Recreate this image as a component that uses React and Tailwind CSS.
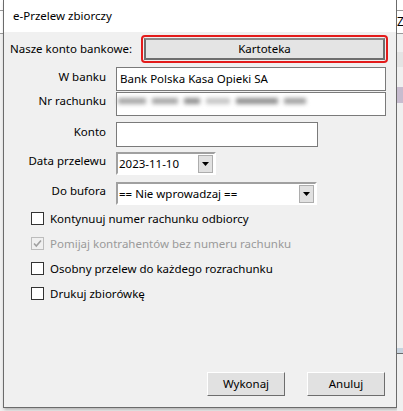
import React from 'react';

const font = { fontFamily: '"Noto Sans", "Segoe UI", Arial, sans-serif' };

const Label = ({ children, className = '' }) => (
  <div className={`w-[96px] shrink-0 text-right text-[11.5px] text-black ${className}`}>{children}</div>
);

const TextBox = ({ className = '', children }) => (
  <div className={`h-[24px] border border-[#7a7a7a] bg-white flex items-center px-[3px] text-[11.5px] text-black ${className}`}>
    {children}
  </div>
);

const Arrow = () => (
  <div className="w-[15px] h-[18px] bg-[#e1e1e1] border border-[#adadad] flex items-center justify-center">
    <svg width="7" height="4" viewBox="0 0 7 4">
      <path d="M0 0h7L3.5 4z" fill="#000" />
    </svg>
  </div>
);

const Combo = ({ value, className = '' }) => (
  <div className={`h-[23px] border-2 border-[#a0a0a0] border-r-white border-b-white bg-white flex items-center justify-between pl-[1px] pr-[1px] text-[11.5px] text-black ${className}`}>
    <span>{value}</span>
    <Arrow />
  </div>
);

const Check = ({ label, checked, disabled }) => (
  <div className="flex items-center gap-[6px] h-[25px]">
    <div className={`w-[13px] h-[13px] border ${disabled ? 'border-[#bcbcbc] bg-[#f0f0f0]' : 'border-[#333] bg-white'} flex items-center justify-center`}>
      {checked && (
        <svg width="9" height="9" viewBox="0 0 9 9">
          <path d="M1 4.5l2.3 2.5L8 1.5" fill="none" stroke="#a0a0a0" strokeWidth="1.6" />
        </svg>
      )}
    </div>
    <span className={`text-[11.5px] ${disabled ? 'text-[#9a9a9a]' : 'text-black'}`}>{label}</span>
  </div>
);

const Btn = ({ children }) => (
  <button className="w-[78px] h-[24px] bg-[#e1e1e1] border border-[#adadad] border-r-[#6d6d6d] border-b-[#6d6d6d] border-l-white border-t-white text-[11.5px] text-black">
    {children}
  </button>
);

export default function App() {
  return (
    <div style={font} className="w-[403px] h-[411px] bg-[#f3f3f3] flex overflow-hidden relative">
      {/* strip of the window behind, on the left */}
      <div className="w-[3px] shrink-0 flex flex-col">
        <div className="h-[10px] bg-white" />
        <div className="h-[1px] bg-[#9a9a9a]" />
        <div className="h-[22px] bg-white" />
        <div className="h-[1px] bg-[#9a9a9a]" />
        <div className="flex-1 bg-[#f0f0f0]" />
      </div>

      {/* dialog */}
      <div className="w-[394px] h-[408px] shrink-0 border border-t-0 border-[#6b6b6b] bg-[#f0f0f0] flex flex-col shadow-[1px_2px_3px_rgba(0,0,0,0.25)]">
        <div className="h-[32px] bg-white flex items-center pl-[9px] text-[11.5px] text-black shrink-0">e-Przelew zbiorczy</div>

        <div className="flex-1 flex flex-col pl-[6px]">
          <div className="flex items-center mt-[3px] h-[28px]">
            <div className="w-[131px] text-[11.5px] text-black">Nasze konto bankowe:</div>
            <div className="w-[247px] h-[28px] rounded-[4px] border-2 border-[#e31b1b] p-[1px]">
              <div className="h-full bg-[#e4e4e4] border-2 border-[#6e6e6e] border-t-[#8a8a8a] flex items-center justify-center text-[11.5px] text-black">
                Kartoteka
              </div>
            </div>
          </div>

          <div className="flex mt-[4px]">
            <Label className="pt-[1px]">W banku</Label>
            <TextBox className="ml-[10px] w-[270px]">Bank Polska Kasa Opieki SA</TextBox>
          </div>

          <div className="flex mt-[1px]">
            <Label>Nr rachunku</Label>
            <TextBox className="ml-[10px] w-[270px]">
              <div className="flex items-center gap-[6px] blur-[2px] -mt-[6px] -ml-[2px]">
                <div className="w-[28px] h-[6px] bg-[#a5a5a5]" />
                <div className="w-[26px] h-[6px] bg-[#a5a5a5]" />
                <div className="w-[16px] h-[6px] bg-[#909090]" />
                <div className="w-[24px] h-[6px] bg-[#c4c4c4]" />
                <div className="w-[42px] h-[6px] bg-[#8f8f8f]" />
                <div className="w-[22px] h-[6px] bg-[#a0a0a0]" />
              </div>
            </TextBox>
          </div>

          <div className="flex mt-[6px]">
            <Label className="pt-[1px]">Konto</Label>
            <TextBox className="ml-[10px] w-[202px] h-[25px]" />
          </div>

          <div className="flex mt-[5px]">
            <Label>Data przelewu</Label>
            <Combo value="2023-11-10" className="ml-[10px] w-[100px]" />
          </div>

          <div className="flex mt-[7px]">
            <Label>Do bufora</Label>
            <Combo value="== Nie wprowadzaj ==" className="ml-[10px] w-[201px]" />
          </div>

          <div className="flex flex-col pl-[21px] mt-[1px]">
            <Check label="Kontynuuj numer rachunku odbiorcy" />
            <Check label="Pomijaj kontrahentów bez numeru rachunku" checked disabled />
            <Check label="Osobny przelew do każdego rozrachunku" />
            <Check label="Drukuj zbiorówkę" />
          </div>

          <div className="flex-1" />

          <div className="flex justify-end gap-[22px] pr-[11px] mb-[11px]">
            <Btn>Wykonaj</Btn>
            <Btn>Anuluj</Btn>
          </div>
        </div>
      </div>

      {/* strip of the window behind, on the right */}
      <div className="flex-1 flex flex-col">
        <div className="h-[10px] bg-white" />
        <div className="h-[1px] bg-[#9a9a9a]" />
        <div className="h-[22px] bg-white text-[12px] leading-[22px] text-black overflow-hidden">Z</div>
        <div className="h-[1px] bg-[#9a9a9a]" />
        <div className="h-[18px] bg-[#f0f0f0]" />
        <div className="h-[15px] bg-[#e4e4e4]" />
        <div className="h-[20px] bg-[#f0f0f0]" />
        <div className="h-[16px] bg-[#c7bccf]" />
        <div className="h-[245px] bg-[#f0f0f0]" />
        <div className="h-[5px] bg-[#c8d4e0]" />
        <div className="h-[1px] bg-[#6b6b6b]" />
        <div className="flex-1 bg-[#f0f0f0]" />
      </div>
    </div>
  );
}
